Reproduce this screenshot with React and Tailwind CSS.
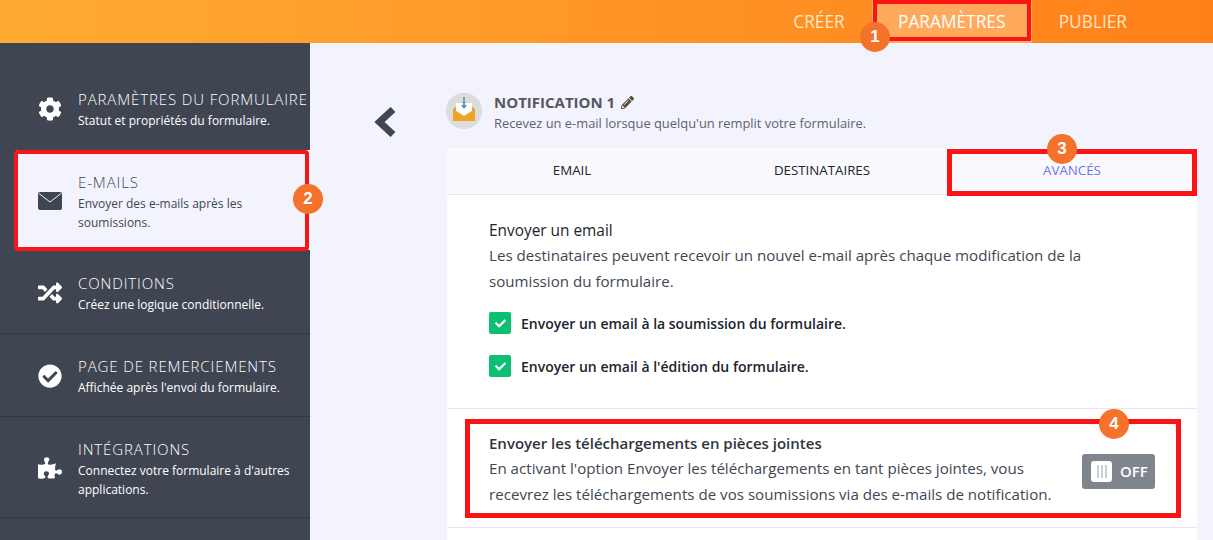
import React from "react";
import { FaCog, FaRandom, FaCheckCircle, FaPuzzlePiece, FaPencilAlt, FaCheck } from "react-icons/fa";

const font = { fontFamily: '"Open Sans", "Noto Sans", sans-serif' };

function MailIcon() {
  return (
    <svg width="24" height="18" viewBox="0 0 24 18" className="block">
      <rect x="0" y="0" width="24" height="18" rx="2" fill="#3f4652" />
      <path d="M1 1.5 L12 10 L23 1.5" fill="none" stroke="#f3f3fe" strokeWidth="1" />
    </svg>
  );
}

function SideItem({ icon, title, lines, active, className = "" }) {
  return (
    <div className={`flex items-center pl-[38px] pr-0 ${active ? "bg-[#f3f3fe] text-[#3f4652]" : "text-white"} ${className}`}>
      <div className="w-[24px] shrink-0 flex justify-center text-[24px]">{icon}</div>
      <div className="ml-[16px] min-w-0">
        <div className={`text-[15px] leading-[22px] tracking-[0.88px] whitespace-nowrap font-light ${active ? "text-[#3f4652]" : "text-white"}`}>{title}</div>
        <div className="text-[12px] leading-[19px] mt-[1px] font-normal">
          {lines.map((l) => <div key={l} className="whitespace-nowrap">{l}</div>)}
        </div>
      </div>
    </div>
  );
}

function Badge({ n, className }) {
  return (
    <div className={`absolute w-[30px] h-[30px] rounded-full bg-[#f4722b] text-white font-bold text-[17px] flex items-center justify-center ${className}`} style={{ fontFamily: '"Liberation Sans", sans-serif' }}>{n}</div>
  );
}

function Check({ label }) {
  return (
    <div className="flex items-center gap-[10px]">
      <div className="w-[22px] h-[22px] rounded-[2px] bg-[#0dbf73] flex items-center justify-center text-white text-[11px]"><FaCheck /></div>
      <span className="text-[14px] font-semibold text-[#20242c] whitespace-nowrap">{label}</span>
    </div>
  );
}

export default function App() {
  return (
    <div className="relative w-[1213px] h-[540px] overflow-hidden bg-[#f3f3fe]" style={font}>
      <header className="h-[43px] bg-gradient-to-r from-[#ffab33] to-[#ff8018] flex justify-end items-stretch text-[17.3px] pr-[86px]">
        <div className="flex items-center text-[#ffe6c8] mr-[27px]">CRÉER</div>
        <div className="w-[160px] bg-[#ffa95c] text-white flex items-center justify-center">PARAMÈTRES</div>
        <div className="flex items-center text-[#ffe6c8] ml-[27px]">PUBLIER</div>
      </header>

      <div className="flex h-[497px]">
        <aside className="w-[310px] shrink-0 bg-[#3f4652] flex flex-col">
          <SideItem className="h-[107px] pt-[24px]" icon={<FaCog />} title="PARAMÈTRES DU FORMULAIRE" lines={["Statut et propriétés du formulaire."]} />
          <SideItem className="h-[100px] ml-[16px] !pl-[22px] pt-[2px]" active icon={<MailIcon />} title="E-MAILS" lines={["Envoyer des e-mails après les", "soumissions."]} />
          <SideItem className="h-[84px] border-b border-[#333842] pt-[2px]" icon={<FaRandom />} title="CONDITIONS" lines={["Créez une logique conditionnelle."]} />
          <SideItem className="h-[83px] border-b border-[#333842] pt-[2px]" icon={<FaCheckCircle />} title="PAGE DE REMERCIEMENTS" lines={["Affichée après l'envoi du formulaire."]} />
          <SideItem className="h-[101px] border-b border-[#333842] pt-[2px]" icon={<FaPuzzlePiece />} title="INTÉGRATIONS" lines={["Connectez votre formulaire à d'autres", "applications."]} />
        </aside>

        <main className="flex-1 flex items-start min-w-0">
          <div className="w-[137px] shrink-0 pt-[64px] pl-[64px]">
            <svg width="22" height="30" viewBox="0 0 22 30" className="block">
              <path d="M19 2.5 L5.5 15 L19 27.5" fill="none" stroke="#3f4652" strokeWidth="7" />
            </svg>
          </div>
          <div className="w-[750px] shrink-0 pt-[50px]">
            <div className="h-[55px] flex items-start -ml-[1px]">
              <svg width="36" height="36" viewBox="0 0 36 36" className="shrink-0">
                <circle cx="18" cy="18" r="18" fill="#dcdcdc" />
                <path d="M7 16 L18 8 L29 16 V28 H7 Z" fill="#f09a22" />
                <path d="M10 10 H26 V20 L18 24 L10 20 Z" fill="#ffffff" />
                <path d="M7 16 L18 23 L29 16 V28 H7 Z" fill="#eea526" />
                <path d="M18 4 V15" stroke="#4a90d0" strokeWidth="1.6" />
                <path d="M15 12 L18 16 L21 12 Z" fill="#4a90d0" />
              </svg>
              <div className="ml-[12px] -mt-[1px]">
                <div className="flex items-center gap-[6px] text-[15px] leading-[20px] font-bold text-[#57585f] whitespace-nowrap">
                  NOTIFICATION 1 <FaPencilAlt className="text-[#5b4a3a] text-[13px]" />
                </div>
                <div className="text-[12.9px] leading-[20px] mt-[1px] text-[#5c6270] whitespace-nowrap">Recevez un e-mail lorsque quelqu'un remplit votre formulaire.</div>
              </div>
            </div>

            <div className="bg-white h-[392px]">
              <div className="h-[47px] bg-[#f9f9fe] border-b border-[#e6e6f2] grid grid-cols-3 text-[13.3px] text-center">
                <div className="flex items-center justify-center text-[#20242c]">EMAIL</div>
                <div className="flex items-center justify-center text-[#20242c]">DESTINATAIRES</div>
                <div className="flex items-center justify-center text-[#6f74ee]">AVANCÉS</div>
              </div>
              <section className="h-[214px] border-b border-[#e6e6f2] pt-[24px] pl-[42px] pr-[100px]">
                <div className="text-[15.4px] leading-[24px] font-medium text-[#20242c]">Envoyer un email</div>
                <p className="text-[15.13px] leading-[26px] text-[#3f4652] -mt-[1px]">Les destinataires peuvent recevoir un nouvel e-mail après chaque modification de la soumission du formulaire.</p>
                <div className="flex flex-col gap-[21px] mt-[18px]">
                  <Check label="Envoyer un email à la soumission du formulaire." />
                  <Check label="Envoyer un email à l'édition du formulaire." />
                </div>
              </section>
              <section className="h-[119px] border-b border-[#e6e6f2] pl-[42px] pr-[42px] pt-[22px] flex justify-between">
                <div className="w-[580px]">
                  <div className="text-[15px] leading-[24px] font-semibold text-[#30343c] whitespace-nowrap">Envoyer les téléchargements en pièces jointes</div>
                  <p className="text-[15.13px] leading-[26px] text-[#3f4652] whitespace-nowrap">En activant l'option Envoyer les téléchargements en tant pièces jointes, vous<br />recevrez les téléchargements de vos soumissions via des e-mails de notification.</p>
                </div>
                <div className="mt-[23px] w-[73px] h-[35px] rounded-[3px] bg-[#80848c] flex items-center pl-[9px] shrink-0">
                  <div className="w-[21px] h-[21px] rounded-[3px] bg-white flex items-center justify-center gap-[2px]">
                    <span className="w-[2px] h-[13px] bg-[#c6d0dc]"></span>
                    <span className="w-[2px] h-[13px] bg-[#c6d0dc]"></span>
                    <span className="w-[2px] h-[13px] bg-[#c6d0dc]"></span>
                  </div>
                  <span className="ml-[8px] text-white font-semibold text-[15px]">OFF</span>
                </div>
              </section>
            </div>
          </div>
        </main>
      </div>

      <div className="absolute left-[873px] top-[0px] w-[158px] h-[41px] border-[4px] border-[#fa1414]"></div>
      <div className="absolute left-[14px] top-[150px] w-[295px] h-[101px] border-[4px] border-[#fa1414] rounded-[4px]"></div>
      <div className="absolute left-[947px] top-[149px] w-[250px] h-[47px] border-[5px] border-[#fa1414]"></div>
      <div className="absolute left-[465px] top-[419px] w-[716px] h-[99px] border-[5px] border-[#fa1414]"></div>
      <Badge n="1" className="left-[860px] top-[22px]" />
      <Badge n="2" className="left-[293px] top-[184px]" />
      <Badge n="3" className="left-[1047px] top-[134px]" />
      <Badge n="4" className="left-[1099px] top-[409px]" />
    </div>
  );
}
